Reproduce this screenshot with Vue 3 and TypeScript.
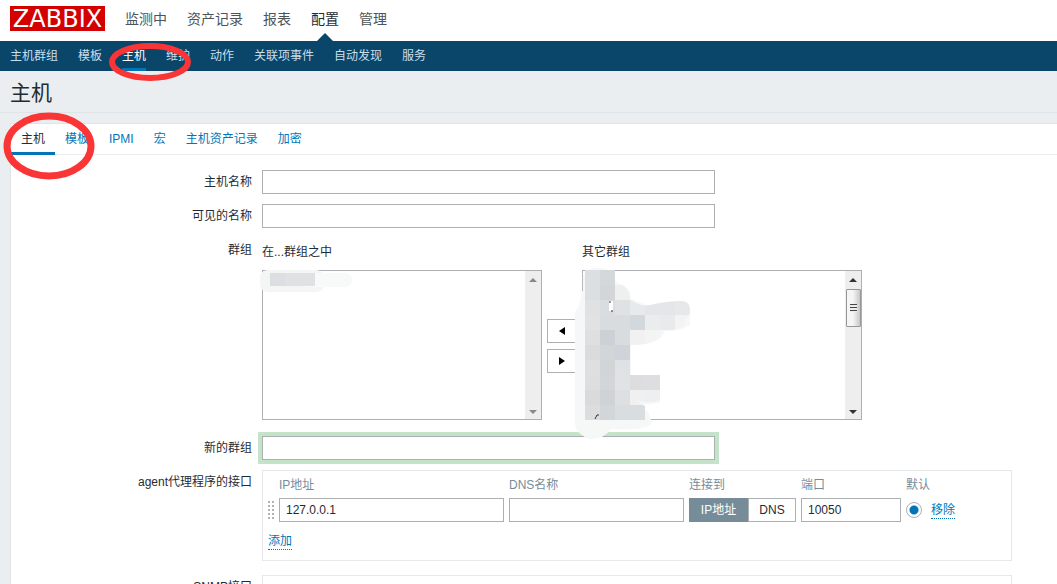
<script setup lang="ts">
import { ref } from 'vue'

interface Cell { x: number; y: number; w: number; h: number; c: string }

const mainMenu: string[] = ['监测中', '资产记录', '报表', '配置', '管理']
const subMenu: string[] = ['主机群组', '模板', '主机', '维护', '动作', '关联项事件', '自动发现', '服务']
const tabs: string[] = ['主机', '模板', 'IPMI', '宏', '主机资产记录', '加密']
const activeMain = ref('配置')
const activeSub = ref('主机')
const activeTab = ref('主机')

const hostName = ref('')
const visibleName = ref('')
const newGroup = ref('')
const ip = ref('127.0.0.1')
const dns = ref('')
const port = ref('10050')
const connectTo = ref('ip')
const defaultInterface = ref('agent')

const shades: string[][] = [
  ['#dcdfe1', '#d4d8db'],
  ['#dcdfe1', '#d2d6d9', '#eeefef'],
  ['#e0e1e2', '#dadddf', '#dfe1e2', '#e7eaec', '#e4e7e9', '#e5e6e7', '#e7e8e9'],
  ['#e0e2e4', '#d9dcdf', '#d8dcdf', '#d3d8dc', '#ebeced', '#e9eaeb', '#f3f3f3'],
  ['#dddfe0', '#cdd1d6', '#d9dcdf', '#f1f1f2', '#f3f4f4'],
  ['#d9dbdd', '#d3d6d9', '#ced4d9'],
  ['#dddfe1', '#d1d5d8', '#dfe2e4'],
  ['#dddedf', '#d3d6d8', '#e0e2e4', '#dddddf', '#dddedf'],
  ['#d8dadc', '#d0d3d5', '#dde0e2', '#f0f0f1', '#eeefef'],
  ['#dbdddf', '#d3d6d9', '#dadddf', '#d9dddf'],
]
const cells: Cell[] = shades.flatMap((row, r) =>
  row.map((c, i) => ({ x: 10 + i * 15, y: 5 + r * 15, w: 15, h: 15, c })),
)
</script>

<template>
  <div class="page">
    <header class="top">
      <a class="logo" href="#">ZABBIX</a>
      <nav class="main-nav">
        <a v-for="m in mainMenu" :key="m" href="#" :class="{ active: m === activeMain }" @click.prevent="activeMain = m">{{ m }}</a>
      </nav>
    </header>
    <nav class="sub-nav">
      <a v-for="s in subMenu" :key="s" href="#" :class="{ active: s === activeSub }" @click.prevent="activeSub = s">{{ s }}</a>
      <svg class="ring ring-sub" width="82" height="38" viewBox="0 0 82 38"><ellipse cx="41" cy="19" rx="38" ry="16" /></svg>
    </nav>
    <h1>主机</h1>
    <main class="panel">
      <nav class="tabs">
        <a v-for="t in tabs" :key="t" href="#" :class="{ active: t === activeTab }" @click.prevent="activeTab = t">{{ t }}</a>
        <svg class="ring ring-tab" width="92" height="68" viewBox="0 0 92 68"><ellipse cx="46" cy="34" rx="42" ry="30" /></svg>
      </nav>
      <form class="form" @submit.prevent>
        <label class="label" for="host">主机名称</label>
        <input id="host" v-model="hostName" class="wide" type="text">

        <label class="label" for="visible">可见的名称</label>
        <input id="visible" v-model="visibleName" class="wide" type="text">

        <span class="label">群组</span>
        <div class="groups">
          <div class="group">
            <label for="in-groups">在...群组之中</label>
            <div class="listbox">
              <select id="in-groups" multiple></select>
              <div class="bar disabled"><i class="up"></i><i class="down"></i></div>
              <svg class="smudge-left" width="92" height="22" viewBox="0 0 92 22">
                <rect width="64" height="22" rx="8" fill="#f4f5f5" />
                <rect x="40" y="3" width="52" height="14" rx="6" fill="#f8f9f9" />
                <rect x="10" y="3" width="15" height="13" fill="#dcdfe2" />
                <rect x="25" y="3" width="30" height="13" fill="#e0e1e2" />
              </svg>
            </div>
          </div>
          <div class="movers">
            <button type="button" aria-label="添加群组"><svg width="6" height="8" viewBox="0 0 6 8"><path d="M6 0v8L0 4z" /></svg></button>
            <button type="button" aria-label="移除群组"><svg width="6" height="8" viewBox="0 0 6 8"><path d="M0 0v8l6-4z" /></svg></button>
          </div>
          <div class="group">
            <label for="other-groups">其它群组</label>
            <div class="listbox">
              <select id="other-groups" multiple></select>
              <div class="bar"><i class="up"></i><span class="thumb"><b></b></span><i class="down"></i></div>
              <svg class="smudge-right" width="118" height="178" viewBox="0 0 118 178">
                <defs>
                  <clipPath id="stroke-area">
                    <path d="M10 5H40V19Q55 20 55 34Q64 42 75 40Q92 36 106 36Q115 36 115 45Q115 52 110 54V60Q106 65 90 65Q85 80 55 80V110H85V135Q75 140 56 134Q70 138 84 155H10Z" />
                  </clipPath>
                </defs>
                <path d="M0 46Q7 42 7 12Q16-2 32 4L42 18Q55 20 56 34L78 42L106 36Q115 36 115 46V60Q106 66 90 66Q86 80 56 80V110H85V138L66 140Q78 150 76 160Q66 166 36 164Q30 174 14 174Q0 168 0 158Z" fill="#f6f8f7" />
                <g clip-path="url(#stroke-area)">
                  <rect v-for="(c, i) in cells" :key="i" :x="c.x" :y="c.y" :width="c.w" :height="c.h" :fill="c.c" />
                </g>
                <path d="M7.5 8V27" stroke="#bbb" fill="none" stroke-dasharray="2 1 15 2" />
                <rect x="34" y="36" width="4" height="10" fill="#fff" />
                <path d="M34 37h2m0 9h2M20 154l2-4h2" stroke="#333" fill="none" />
              </svg>
            </div>
          </div>
        </div>

        <label class="label" for="new-group">新的群组</label>
        <input id="new-group" v-model="newGroup" class="wide focused" type="text">

        <span class="label">agent代理程序的接口</span>
        <section class="interfaces">
          <table>
            <thead>
              <tr><th class="grip-col"></th><th>IP地址</th><th>DNS名称</th><th>连接到</th><th>端口</th><th colspan="2">默认</th></tr>
            </thead>
            <tbody>
              <tr>
                <td class="grip-col"><svg class="grip" width="6" height="18" viewBox="0 0 6 18"><path d="M1 0v18M5 0v18" /></svg></td>
                <td><input v-model="ip" class="ip" type="text" aria-label="IP地址"></td>
                <td><input v-model="dns" class="dns" type="text" aria-label="DNS名称"></td>
                <td>
                  <div class="toggle">
                    <button type="button" class="by-ip" :class="{ on: connectTo === 'ip' }" @click="connectTo = 'ip'">IP地址</button>
                    <button type="button" class="by-dns" :class="{ on: connectTo === 'dns' }" @click="connectTo = 'dns'">DNS</button>
                  </div>
                </td>
                <td><input v-model="port" class="port" type="text" aria-label="端口"></td>
                <td class="radio-cell"><input v-model="defaultInterface" type="radio" value="agent" aria-label="默认"></td>
                <td><a class="action" href="#">移除</a></td>
              </tr>
            </tbody>
          </table>
          <a class="action" href="#">添加</a>
        </section>

        <span class="label">SNMP接口</span>
        <section class="interfaces"></section>
      </form>
    </main>
  </div>
</template>

<style>
body { margin: 0; overflow: hidden; }
</style>

<style scoped>
* { box-sizing: border-box; }
.page {
  height: 100vh;
  overflow: hidden;
  display: flex;
  flex-direction: column;
  background: #ebeef0;
  color: #1f2c33;
  font: 12px/16px "Liberation Sans", "Noto Sans CJK SC", sans-serif;
}
.page > * { flex-shrink: 0; }
a { text-decoration: none; color: #0275b8; }
input, button, select { font: inherit; color: inherit; margin: 0; border-radius: 0; }
.top {
  height: 41px;
  padding: 0 10px;
  display: flex;
  gap: 20px;
  background: #fff;
}
.logo {
  width: 95px;
  height: 25px;
  margin-top: 6px;
  background: #d40000;
  color: #fff;
  font: 24px/27px "DejaVu Sans", sans-serif;
  text-align: center;
}
.main-nav { display: flex; gap: 20px; font-size: 14px; line-height: 38px; }
.main-nav a { position: relative; color: #4c545a; }
.main-nav a.active { color: #1f2c33; }
.main-nav a.active::after {
  content: "";
  position: absolute;
  left: 50%;
  bottom: 0;
  margin-left: -8px;
  border: 8px solid transparent;
  border-top: 0;
  border-bottom-color: #0a466a;
}
.sub-nav {
  position: relative;
  z-index: 1;
  height: 30px;
  padding: 0 10px;
  display: flex;
  gap: 20px;
  background: #0a466a;
  line-height: 30px;
}
.sub-nav a { color: #c8dfec; }
.sub-nav a.active { color: #fff; border-bottom: 3px solid #0275b8; }
.ring { position: absolute; fill: none; stroke: #fa3535; pointer-events: none; }
.ring-sub { left: 109px; top: 2px; stroke-width: 6; }
.ring-tab { left: -8px; top: -12px; stroke-width: 7; z-index: 1; }
h1 {
  height: 42px;
  margin: 0 0 10px;
  padding-left: 10px;
  border-bottom: 1px solid #dfe4e7;
  font-size: 21px;
  font-weight: 400;
  line-height: 44px;
}
.panel {
  flex: 1;
  margin-left: 10px;
  background: #fff;
  border: 1px solid #dfe4e7;
  border-width: 1px 0 0 1px;
}
.tabs {
  position: relative;
  height: 31px;
  display: flex;
  border-bottom: 1px solid #ebeef0;
}
.tabs a { height: 31px; padding: 0 10px; line-height: 30px; }
.tabs a.active { color: #1f2c33; border-bottom: 3px solid #0275b8; }
.form {
  display: grid;
  grid-template-columns: 241px 750px;
  column-gap: 10px;
  row-gap: 10px;
  padding-top: 15px;
}
.label { text-align: right; line-height: 24px; }
input[type="text"] {
  height: 24px;
  padding: 0 6px;
  border: 1px solid #acb0b3;
  background: #fff;
  outline: none;
}
.wide { width: 453px; }
.wide.focused { box-shadow: 0 0 0 4px #c5e3c8; }
.groups { display: flex; margin-bottom: 6px; }
.group label { display: block; height: 32px; line-height: 28px; }
.listbox {
  position: relative;
  display: flex;
  width: 280px;
  height: 150px;
  border: 1px solid #acb0b3;
}
.listbox select {
  flex: 1;
  min-width: 0;
  height: 100%;
  border: 0;
  padding: 0;
  background: #fff;
  outline: none;
  overflow: hidden;
}
.bar {
  width: 16px;
  display: flex;
  flex-direction: column;
  align-items: center;
  padding: 7px 0 5px;
  background: #eeeeef;
}
.bar i { border: 4px solid transparent; height: 0; width: 0; }
.bar .up { border-top: 0; border-bottom: 4px solid #333; }
.bar .down { border-bottom: 0; border-top: 4px solid #333; margin-top: auto; }
.bar.disabled .up { border-bottom-color: #888; }
.bar.disabled .down { border-top-color: #888; }
.thumb {
  width: 15px;
  height: 38px;
  margin-top: 7px;
  display: grid;
  place-items: center;
  border: 1px solid #979797;
  border-radius: 1px;
  background: linear-gradient(90deg, #f5f5f5 0 45%, #c8c8ca);
}
.thumb b {
  width: 7px;
  height: 8px;
  background: repeating-linear-gradient(#444 0 1px, #eee 1px 3px);
}
.smudge-left { position: absolute; left: -3px; top: -1px; }
.smudge-right { position: absolute; left: -8px; top: -6px; }
.movers {
  display: flex;
  flex-direction: column;
  gap: 6px;
  padding: 81px 5px 0;
}
.movers button {
  width: 30px;
  height: 24px;
  padding: 0;
  display: grid;
  place-items: center;
  border: 1px solid #acb0b3;
  background: #fff;
}
.interfaces {
  min-height: 91px;
  padding: 5px;
  margin-bottom: 4px;
  border: 1px solid #e6e9eb;
}
table { border-collapse: collapse; margin-bottom: 10px; }
th { height: 22px; padding: 0; text-align: left; vertical-align: top; line-height: 18px; font-weight: 400; color: #768d99; }
td { padding: 0 5px 0 0; height: 24px; }
td input, .grip { display: block; }
.grip-col { width: 11px; }
.grip path { stroke: #b0b4b7; stroke-width: 2; stroke-dasharray: 2 2; }
.ip { width: 225px; }
.dns { width: 175px; }
.port { width: 100px; }
.toggle { display: flex; }
.toggle button { height: 24px; padding: 0; border: 1px solid #acb0b3; background: #fff; }
.toggle button.on { background: #768d99; border-color: #768d99; color: #fff; }
.by-ip { width: 59px; }
.by-dns { width: 48px; }
.radio-cell { padding-right: 9px; }
input[type="radio"] {
  appearance: none;
  width: 16px;
  height: 16px;
  border: 1px solid #acb0b3;
  border-radius: 50%;
  background: radial-gradient(circle, #0275b8 0 4px, #fff 5px);
}
.action { display: inline-block; padding-top: 2px; line-height: 15px; border-bottom: 1px dotted #0275b8; }
</style>
